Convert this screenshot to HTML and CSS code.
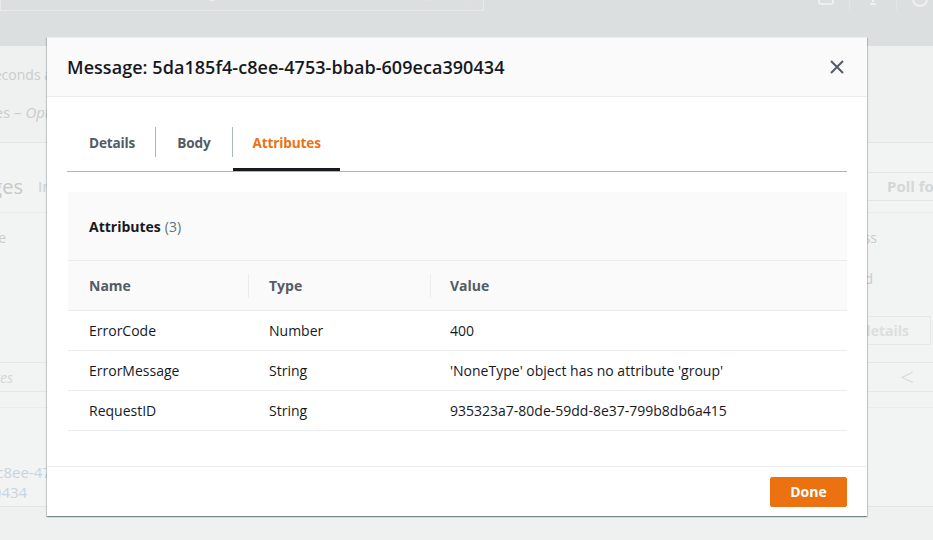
FILE: index.html
```html
<!DOCTYPE html>
<html lang="en">
<head>
<meta charset="utf-8">
<title>Message</title>
<link rel="stylesheet" href="styles.css">
</head>
<body>
<div class="page">
  <header class="topbar">
    <div class="search"><span class="search-text">Search for services, features, blogs, docs, and more</span><span class="search-key">[Alt+S]</span></div>
    <div class="nav-icons">
      <svg class="nav-icon" width="18" height="18" viewBox="0 0 18 18"><rect x="2" y="2" width="14" height="12" rx="2" fill="none" stroke="#eef0f0" stroke-width="2"/></svg>
      <span class="nav-sep"></span>
      <svg class="nav-icon" width="18" height="18" viewBox="0 0 18 18"><path d="M9 2v10M6 14h6" fill="none" stroke="#eef0f0" stroke-width="2"/></svg>
      <span class="nav-sep"></span>
      <svg class="nav-icon" width="18" height="18" viewBox="0 0 18 18"><circle cx="9" cy="9" r="7" fill="none" stroke="#eef0f0" stroke-width="2"/></svg>
    </div>
  </header>
  <main class="content">
    <div class="meta clip"><span>Last polled 19 seconds ago</span></div>
    <div class="crumb clip"><span>Send and receive messages – <em>Optional</em></span></div>
    <section class="panel">
      <div class="panel-head">
        <h2 class="panel-title clip"><span>Receive messages</span></h2>
        <span class="info">Info</span>
        <span class="spacer"></span>
        <span class="poll-btn">Poll for messages</span>
      </div>
      <div class="panel-row first">
        <span class="l-frag clip"><span>Message</span></span>
        <span class="r-frag clip"><span>Progress</span></span>
      </div>
      <div class="panel-row second">
        <span class="r-frag clip r2"><span>Received</span></span>
      </div>
      <div class="panel-row third">
        <span class="ghost-btn"><span>View details</span></span>
      </div>
      <div class="panel-search">
        <span class="search-ph clip"><span>Search messages</span></span>
        <span class="chev">&lt;</span>
      </div>
      <div class="panel-msg">
        <span class="msg-id">5da185f4-c8ee-4753-bbab-<br>609eca390434</span>
      </div>
    </section>
  </main>

  <div class="modal" role="dialog">
    <div class="modal-header">
      <h1 class="modal-title">Message: 5da185f4-c8ee-4753-bbab-609eca390434</h1>
      <svg class="close" width="16" height="16" viewBox="0 0 16 16"><path d="M2 2l12 12M14 2L2 14" fill="none" stroke="#545b64" stroke-width="2"/></svg>
    </div>
    <div class="modal-body">
      <nav class="tabs">
        <span class="tab first">Details</span>
        <span class="tab-sep"></span>
        <span class="tab">Body</span>
        <span class="tab-sep"></span>
        <span class="tab active">Attributes</span>
      </nav>
      <div class="container">
        <div class="container-head">Attributes <span class="count">(3)</span></div>
        <table class="attr-table">
          <thead>
            <tr><th class="c-name">Name</th><th class="c-type"><span class="col-sep"></span>Type</th><th class="c-value"><span class="col-sep"></span>Value</th></tr>
          </thead>
          <tbody>
            <tr><td>ErrorCode</td><td>Number</td><td>400</td></tr>
            <tr><td>ErrorMessage</td><td>String</td><td>'NoneType' object has no attribute 'group'</td></tr>
            <tr><td>RequestID</td><td>String</td><td>935323a7-80de-59dd-8e37-799b8db6a415</td></tr>
          </tbody>
        </table>
      </div>
    </div>
    <div class="modal-footer">
      <button class="done">Done</button>
    </div>
  </div>
</div>
</body>
</html>
```

FILE: styles.css
```css
* { box-sizing: border-box; }
html, body { margin: 0; padding: 0; }
body {
  width: 933px;
  height: 540px;
  overflow: hidden;
  background: #eff0f0;
  font-family: "Open Sans", "Noto Sans", sans-serif;
  font-size: 14px;
  color: #16191f;
}
.page { position: relative; width: 933px; height: 540px; overflow: hidden; }

/* text whose start is cut off at the left: it ends at the box's right edge */
.clip {
  display: flex;
  justify-content: flex-end;
  white-space: nowrap;
  flex: none;
}
.clip > span { flex: none; }

/* dimmed background page */
.topbar {
  height: 46px;
  background: #dcdfe0;
  display: flex;
  justify-content: space-between;
  align-items: flex-start;
}
.search {
  width: 484px;
  height: 32px;
  margin-top: -21px;
  border: 1px solid #e8eaea;
  border-top: none;
  display: flex;
  justify-content: space-between;
  align-items: flex-end;
  padding: 0 16px 8px 0;
  color: #eef0f0;
  font-size: 14px;
  font-weight: 600;
  line-height: 18px;
  overflow: hidden;
}
.search-text { margin-left: -12px; }
.nav-icons {
  display: flex;
  align-items: flex-start;
  margin-top: -10px;
  gap: 14px;
  padding-right: 4px;
}
.nav-icon { display: block; }
.nav-sep { width: 1px; height: 20px; background: #e3e6e6; }

.content { color: #c9cdcd; }
.meta { width: 68px; padding-top: 19px; line-height: 20px; }
.crumb { width: 83px; padding-top: 17px; line-height: 20px; font-size: 15px; }
.crumb em { font-style: italic; }
.panel {
  margin-top: 20px;
  border-top: 1px solid #e3e5e5;
  border-bottom: 1px solid #e3e5e5;
  background: #f2f3f3;
}
.panel-head {
  display: flex;
  align-items: center;
  height: 70px;
  padding: 29px 0 12px;
  border-bottom: 1px solid #e9ebeb;
}
.panel-title {
  width: 23px;
  margin: 0;
  font-size: 20px;
  font-weight: 400;
  line-height: 29px;
  color: #c5c9c9;
}
.info { font-size: 14px; color: #d3d7d7; font-weight: 600; margin-left: 15px; }
.spacer { flex: 1; }
.poll-btn {
  font-weight: 700;
  color: #d3d7d7;
  font-size: 15px;
  border: 1px solid #e3e5e5;
  border-left: none;
  border-right: none;
  height: 29px;
  line-height: 27px;
  padding-left: 19px;
  width: 65px;
  white-space: nowrap;
  overflow: hidden;
}
.panel-row {
  display: flex;
  justify-content: space-between;
  line-height: 20px;
}
.panel-row.first { padding-top: 15px; }
.panel-row.second { padding-top: 21px; justify-content: flex-end; }
.panel-row.third { padding-top: 27px; justify-content: flex-end; }
.l-frag { width: 6px; }
.r-frag { width: 10px; margin-right: 56px; }
.r-frag.r2 { width: 7px; margin-right: 60px; }
.ghost-btn {
  display: flex;
  justify-content: flex-end;
  align-items: center;
  white-space: nowrap;
  width: 63px;
  height: 29px;
  margin-right: 2px;
  border: 1px solid #e6e8e8;
  border-left: none;
  padding-right: 21px;
  font-weight: 700;
  font-size: 14px;
  color: #dcdfdf;
}
.ghost-btn > span { flex: none; }
.panel-search {
  display: flex;
  justify-content: space-between;
  align-items: center;
  margin-top: 17px;
  height: 30px;
  border-top: 1px solid #e6e8e8;
  border-bottom: 1px solid #e6e8e8;
}
.search-ph { width: 13px; font-style: italic; color: #d3d7d7; }
.chev { font-size: 24px; line-height: 28px; color: #d5d9d9; margin-right: 19px; font-weight: 300; }
.panel-msg {
  margin-top: 15px;
  border-top: 1px solid #ebeded;
  padding: 54px 0 4px 0;
}
.msg-id {
  display: block;
  margin-left: -74px;
  font-size: 15px;
  line-height: 20px;
  color: #c7d5e2;
  white-space: nowrap;
}

/* modal */
.modal {
  position: absolute;
  left: 47px;
  top: 37px;
  width: 820px;
  height: 479px;
  background: #ffffff;
  border-top: 1px solid #eaeded;
  box-shadow: 0 1px 1px 0 rgba(0, 28, 36, 0.3), 1px 1px 1px 0 rgba(0, 28, 36, 0.15), -1px 1px 1px 0 rgba(0, 28, 36, 0.15);
  display: flex;
  flex-direction: column;
}
.modal-header {
  height: 59px;
  flex: none;
  background: #fafafa;
  border-bottom: 1px solid #eaeded;
  display: flex;
  align-items: center;
  justify-content: space-between;
  padding: 0 22px 0 20px;
}
.modal-title {
  margin: 0;
  font-size: 18px;
  font-weight: 600;
  color: #16191f;
  line-height: 22px;
  letter-spacing: 0.05px;
}
.close { display: block; }
.modal-body {
  flex: 1;
  padding: 0 20px;
}
.tabs {
  display: flex;
  align-items: center;
  height: 75px;
  padding-top: 16px;
  border-bottom: 1px solid #aab7b8;
  margin-bottom: 20px;
}
.tab {
  height: 58px;
  display: flex;
  align-items: center;
  padding: 0 21px;
  font-weight: 700;
  color: #545b64;
  font-size: 13.6px;
  letter-spacing: -0.15px;
}
.tab.first { padding: 0 20px 0 22px; }
.tab.active {
  color: #ec7211;
  padding: 0 20px;
  box-shadow: inset 0 -3px 0 #16191f;
  width: 107px;
}
.tab-sep { width: 1px; height: 30px; background: #aab7b8; }

.container {
  background: #ffffff;
  margin-left: 1px;
}
.container-head {
  height: 69px;
  background: #fafafa;
  border-bottom: 1px solid #eaeded;
  padding: 0 21px;
  display: flex;
  align-items: center;
  gap: 4px;
  font-weight: 700;
  font-size: 14px;
  color: #16191f;
}
.count { font-weight: 400; color: #687078; }
.attr-table {
  width: 100%;
  border-collapse: collapse;
  table-layout: fixed;
}
.attr-table th {
  height: 49px;
  background: #fafafa;
  border-bottom: 1px solid #eaeded;
  text-align: left;
  font-weight: 700;
  color: #545b64;
  padding: 0 20px;
  position: relative;
}
.attr-table th.c-name { width: 180px; padding-left: 21px; }
.attr-table th.c-type { width: 182px; padding-left: 21px; }
.col-sep {
  position: absolute;
  left: 0;
  top: 13px;
  width: 1px;
  height: 24px;
  background: #eaeded;
}
.attr-table td {
  height: 40px;
  border-bottom: 1px solid #eaeded;
  padding: 0 20px;
  color: #16191f;
  white-space: nowrap;
}
.attr-table td:first-child { padding-left: 21px; }
.attr-table td:nth-child(2) { padding-left: 21px; }

.modal-footer {
  height: 50px;
  flex: none;
  border-top: 1px solid #eaeded;
  display: flex;
  align-items: center;
  justify-content: flex-end;
  padding: 0 20px;
}
.done {
  width: 77px;
  height: 30px;
  background: #ec7211;
  border: 1px solid #ec7211;
  border-radius: 2px;
  color: #ffffff;
  font-family: "Open Sans", "Noto Sans", sans-serif;
  font-weight: 700;
  font-size: 14px;
  line-height: 26px;
  padding: 0;
}
```
